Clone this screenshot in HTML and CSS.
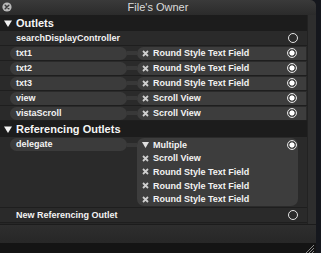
FILE: index.html
```html
<!DOCTYPE html>
<html>
<head>
<meta charset="utf-8">
<link rel="stylesheet" href="styles.css">
</head>
<body>
<div class="window">
  <div class="titlebar">
    <svg class="close" width="10" height="10" viewBox="0 0 10 10"><circle cx="5" cy="5" r="4.6" fill="#b9b9b9"/><path d="M3.2 3.2 L6.8 6.8 M6.8 3.2 L3.2 6.8" stroke="#3a3a3a" stroke-width="1.5" stroke-linecap="round"/></svg>
    <span class="title">File's Owner</span>
  </div>
  <div class="body">
    <div class="main">
      <div class="header"><svg class="tri" width="8" height="7" viewBox="0 0 8 7"><polygon points="0,0.5 8,0.5 4,7" fill="#f2f2f2"/></svg><span>Outlets</span></div>
      <div class="row"><span class="name">searchDisplayController</span><span class="radio"></span></div>
      <div class="row"><span class="pill">txt1</span><span class="link"></span><span class="target"><svg class="x" width="7" height="7" viewBox="0 0 7 7"><path d="M1 1 L6 6 M6 1 L1 6" stroke="#cfcfcf" stroke-width="1.8"/></svg><span class="tt">Round Style Text Field</span><span class="radio on"></span></span></div>
      <div class="row"><span class="pill">txt2</span><span class="link"></span><span class="target"><svg class="x" width="7" height="7" viewBox="0 0 7 7"><path d="M1 1 L6 6 M6 1 L1 6" stroke="#cfcfcf" stroke-width="1.8"/></svg><span class="tt">Round Style Text Field</span><span class="radio on"></span></span></div>
      <div class="row"><span class="pill">txt3</span><span class="link"></span><span class="target"><svg class="x" width="7" height="7" viewBox="0 0 7 7"><path d="M1 1 L6 6 M6 1 L1 6" stroke="#cfcfcf" stroke-width="1.8"/></svg><span class="tt">Round Style Text Field</span><span class="radio on"></span></span></div>
      <div class="row"><span class="pill">view</span><span class="link"></span><span class="target"><svg class="x" width="7" height="7" viewBox="0 0 7 7"><path d="M1 1 L6 6 M6 1 L1 6" stroke="#cfcfcf" stroke-width="1.8"/></svg><span class="tt">Scroll View</span><span class="radio on"></span></span></div>
      <div class="row"><span class="pill">vistaScroll</span><span class="link"></span><span class="target"><svg class="x" width="7" height="7" viewBox="0 0 7 7"><path d="M1 1 L6 6 M6 1 L1 6" stroke="#cfcfcf" stroke-width="1.8"/></svg><span class="tt">Scroll View</span><span class="radio on"></span></span></div>
      <div class="header"><svg class="tri" width="8" height="7" viewBox="0 0 8 7"><polygon points="0,0.5 8,0.5 4,7" fill="#f2f2f2"/></svg><span>Referencing Outlets</span></div>
      <div class="row multi"><span class="pill">delegate</span><span class="link"></span>
        <div class="box">
          <div class="item"><svg class="x" width="7" height="7" viewBox="0 0 7 7"><polygon points="0,1 7,1 3.5,7" fill="#e0e0e0"/></svg><span class="tt">Multiple</span><span class="radio on"></span></div>
          <div class="item"><svg class="x" width="7" height="7" viewBox="0 0 7 7"><path d="M1 1 L6 6 M6 1 L1 6" stroke="#cfcfcf" stroke-width="1.8"/></svg><span class="tt">Scroll View</span></div>
          <div class="item"><svg class="x" width="7" height="7" viewBox="0 0 7 7"><path d="M1 1 L6 6 M6 1 L1 6" stroke="#cfcfcf" stroke-width="1.8"/></svg><span class="tt">Round Style Text Field</span></div>
          <div class="item"><svg class="x" width="7" height="7" viewBox="0 0 7 7"><path d="M1 1 L6 6 M6 1 L1 6" stroke="#cfcfcf" stroke-width="1.8"/></svg><span class="tt">Round Style Text Field</span></div>
          <div class="item"><svg class="x" width="7" height="7" viewBox="0 0 7 7"><path d="M1 1 L6 6 M6 1 L1 6" stroke="#cfcfcf" stroke-width="1.8"/></svg><span class="tt">Round Style Text Field</span></div>
        </div>
      </div>
      <div class="row"><span class="name">New Referencing Outlet</span><span class="radio"></span></div>
    </div>
    <div class="scroll"></div>
  </div>
  <div class="footer"></div>
  <div class="status">
    <svg class="grip" width="10" height="9" viewBox="0 0 10 9"><path d="M2 9 L10 1 M5 9 L10 4 M8 9 L10 7" stroke="#8a8a8a" stroke-width="1"/></svg>
  </div>
</div>
</body>
</html>
```
FILE: styles.css
```css
html, body {
  margin: 0;
  padding: 0;
}
body {
  width: 321px;
  height: 253px;
  background: #15171d;
  font-family: "Liberation Sans", Arial, sans-serif;
  color: #f3f3f3;
  overflow: hidden;
}
.window {
  width: 316px;
  height: 253px;
  display: flex;
  flex-direction: column;
  background: #272727;
  border-top-right-radius: 6px;
  overflow: hidden;
}
.titlebar {
  height: 15px;
  flex: none;
  display: flex;
  align-items: center;
  justify-content: center;
  background: linear-gradient(#3a3a3a, #2b2b2b);
  position: relative;
}
.close {
  position: absolute;
  left: 2px;
  top: 2px;
}
.title {
  font-size: 11px;
  color: #dcdcdc;
  line-height: 15px;
  margin-left: 0;
}
.body {
  height: 209px;
  flex: none;
  display: flex;
}
.main {
  width: 307px;
  background: #272727;
  display: flex;
  flex-direction: column;
}
.scroll {
  width: 8px;
  background: #2e2e2e;
  border-left: 1px solid #222;
}
.header {
  height: 16px;
  flex: none;
  background: #1c1c1c;
  display: flex;
  align-items: center;
  padding-left: 4px;
  gap: 4px;
  font-size: 11px;
  font-weight: bold;
  color: #f5f5f5;
}
.tri {
  display: block;
}
.row {
  height: 14px;
  flex: none;
  border-bottom: 1px solid #1e1e1e;
  background: #2a2a2a;
  display: flex;
  align-items: center;
  font-size: 9px;
  font-weight: bold;
}
.name {
  padding-left: 16px;
  flex: 1;
}
.pill {
  flex: none;
  margin-left: 10px;
  width: 111px;
  height: 13px;
  line-height: 13px;
  padding-left: 6px;
  border-radius: 7px;
  background: #3b3b3b;
}
.link {
  flex: none;
  width: 10px;
  height: 4px;
  background: #383838;
}
.target {
  flex: 1;
  height: 13px;
  margin-right: 1px;
  border-radius: 7px 0 0 7px;
  background: #3d3d3d;
  display: flex;
  align-items: center;
  padding-left: 5px;
}
.x {
  display: block;
  flex: none;
}
.tt {
  margin-left: 4px;
  flex: 1;
  white-space: nowrap;
}
.radio {
  flex: none;
  width: 8px;
  height: 8px;
  border: 1.5px solid #e4e4e4;
  border-radius: 50%;
  margin-right: 9px;
}
.radio.on {
  background: radial-gradient(circle, #ffffff 0 2.3px, #4a4a4a 2.8px 100%);
}
.row.multi {
  height: 70px;
  align-items: flex-start;
}
.row.multi .pill {
  margin-top: 1px;
}
.row.multi .link {
  margin-top: 5.5px;
}
.box {
  flex: 1;
  margin-top: 1px;
  margin-right: 9px;
  height: 68px;
  border-radius: 7px;
  background: #3d3d3d;
  display: flex;
  flex-direction: column;
  padding-top: 0;
}
.item {
  height: 13.6px;
  display: flex;
  align-items: center;
  padding-left: 5px;
}
.item .radio {
  margin-right: 1px;
}
.footer {
  height: 18px;
  flex: none;
  border-top: 1px solid #1c1c1c;
  background: linear-gradient(#2e2e2e, #272727);
}
.status {
  height: 10px;
  flex: none;
  background: #141414;
  display: flex;
  justify-content: flex-end;
  align-items: flex-end;
}
.grip {
  display: block;
  margin-right: 2px;
}
```
